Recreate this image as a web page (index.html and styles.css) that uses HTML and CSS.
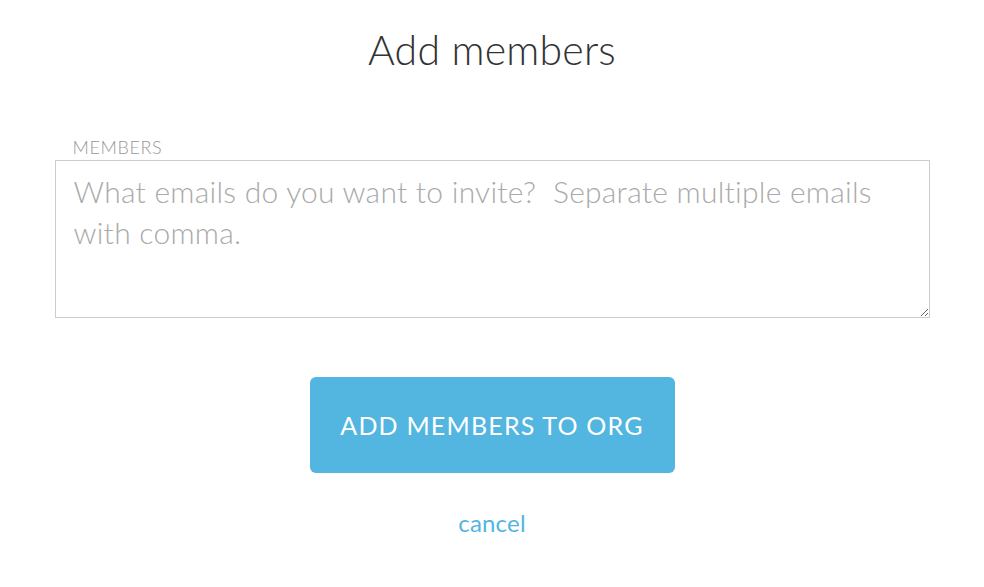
FILE: index.html
```html
<!DOCTYPE html>
<html>
<head>
<meta charset="utf-8">
<link rel="stylesheet" href="styles.css">
</head>
<body>
<div class="modal">
  <h1 class="title">Add members</h1>
  <div class="field">
    <label class="label" for="members">MEMBERS</label>
    <textarea id="members" class="input" placeholder="What emails do you want to invite?  Separate multiple emails with comma."></textarea>
  </div>
  <button class="primary">ADD MEMBERS TO ORG</button>
  <a class="cancel" href="#">cancel</a>
</div>
</body>
</html>
```
FILE: styles.css
```css
html, body {
  margin: 0;
  padding: 0;
  background: #fff;
  font-family: Lato, "Open Sans", sans-serif;
}
.modal {
  width: 984px;
  height: 587px;
  display: flex;
  flex-direction: column;
  align-items: center;
  box-sizing: border-box;
  padding-top: 24px;
}
.title {
  margin: 0;
  font-weight: 300;
  font-size: 41px;
  line-height: 52px;
  letter-spacing: 0.2px;
  color: #333;
}
.field {
  margin-top: 61px;
  width: 875px;
  display: flex;
  flex-direction: column;
}
.label {
  font-weight: 300;
  font-size: 18px;
  line-height: 20px;
  color: #999;
  padding-left: 18px;
  margin-bottom: 3px;
  letter-spacing: 0.6px;
}
.input {
  box-sizing: border-box;
  width: 875px;
  height: 158px;
  border: 1px solid #ccc;
  border-radius: 0;
  padding: 10px 18px;
  font-family: Lato, sans-serif;
  font-weight: 300;
  font-size: 30px;
  line-height: 41px;
  letter-spacing: 0.25px;
  color: #333;
  resize: vertical;
  outline: none;
}
.input::placeholder {
  color: #aaa;
  opacity: 1;
}
.primary {
  margin-top: 59px;
  width: 365px;
  height: 96px;
  border: none;
  border-radius: 6px;
  background: #52b6e0;
  color: #fff;
  font-family: Lato, sans-serif;
  font-weight: 400;
  font-size: 25px;
  letter-spacing: 1.2px;
  cursor: pointer;
}
.cancel {
  margin-top: 36px;
  font-size: 24px;
  line-height: 28px;
  letter-spacing: 0.2px;
  color: #52b6e0;
  text-decoration: none;
}
```
